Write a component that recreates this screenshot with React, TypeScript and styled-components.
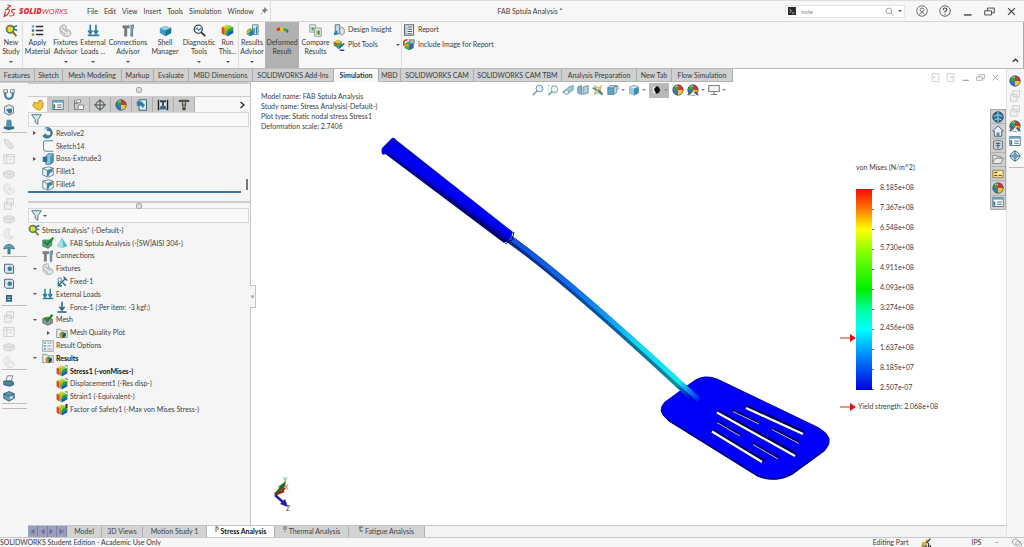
import React from 'react';
import styled, { createGlobalStyle, css } from 'styled-components';

const Global = createGlobalStyle`
  * { box-sizing: border-box; }
  html, body { margin: 0; background: #fff; }
  body, button, input { font-family: Lato, "Open Sans", sans-serif; font-size: 7px; line-height: 9px; color: #3a3a3a; }
  button { border: 0; padding: 0; margin: 0; background: none; white-space: nowrap; }
`;

/* ---------- icons, all on a 16 unit grid ---------- */

const Svg = styled.svg<{ $s: number; $faded?: boolean }>`
  width: ${p => p.$s}px;
  height: ${p => p.$s}px;
  flex: none;
  display: block;
  opacity: ${p => (p.$faded ? 0.35 : 1)};
`;

const teal = '#2f7f9f';
const pale = '#9cc9dc';
const grey = '#8b8f92';

const rainbowCube = (
  <>
    <path d="M8 1L15 4V11L8 15L1 11V4Z" fill="#38b54a" />
    <path d="M8 1L15 4L8 7L1 4Z" fill="#8fcf3a" />
    <path d="M8 1L11 2L4 5L1 4Z" fill="#f6d51f" />
    <path d="M1 4L8 7V9L1 6Z" fill="#f0c52e" />
    <path d="M1 4L4 5V14L1 11Z" fill="#e8402a" />
    <path d="M4 5L6 6V14L4 13Z" fill="#f08a1d" />
    <path d="M8 7L15 4V8L8 11Z" fill="#2a9a4a" />
    <path d="M8 11L15 8V11L8 15Z" fill="#1c55c8" />
  </>
);
const ball = (
  <>
    <circle cx="8" cy="8" r="7" fill="#3a6fc4" />
    <path d="M8 8V1A7 7 0 0 0 1 8Z" fill="#3d9a48" />
    <path d="M8 8V1A7 7 0 0 1 15 8Z" fill="#d8352b" />
    <path d="M8 8H15A7 7 0 0 1 8 15Z" fill="#f0c52e" />
    <circle cx="8" cy="8" r="7" fill="none" stroke="#33414a" strokeWidth="0.8" />
    <path d="M4 4Q6 2 8 3" stroke="#fff" strokeWidth="1.2" fill="none" opacity=".7" />
  </>
);
const folder = <path d="M1 3H6L7 5H15V14H1Z" fill="#eceef0" stroke="#777d82" />;

const art: Record<string, React.ReactNode> = {
  study: (
    <>
      <circle cx="6.5" cy="6.5" r="4.5" fill="#d7e23a" stroke="#3f7f5a" strokeWidth="2" />
      <path d="M1 6Q3 1 7 3" stroke="#e8722a" strokeWidth="1.6" fill="none" />
      <path d="M9 9L14 15" stroke="#8b6a24" strokeWidth="2.4" />
      <path d="M10 4L15 2M11 6L15 8" stroke="#2f6f93" strokeWidth="1.8" />
    </>
  ),
  list: (
    <>
      <path d="M6 3H15M6 8H15M6 13H15" stroke="#333" strokeWidth="1.8" />
      <path d="M1 3H4" stroke="#8a9aa4" strokeWidth="3" /><path d="M1 8H4" stroke="#4c6d86" strokeWidth="3" /><path d="M1 13H4" stroke="#9c8a60" strokeWidth="3" />
    </>
  ),
  fixture: (
    <>
      <path d="M3 2L7 1L9 3L8 6L13 8L15 12L12 15H6L2 11L1 5Z" fill="#e6e9ea" stroke={grey} />
      <path d="M4 4L6 7L11 10M3 9L8 13" stroke={grey} fill="none" />
    </>
  ),
  loads: (
    <path d="M4 1V10M1.500 8L4 12L6.500 8M11 1V10M8.500 8L11 12L13.500 8M1 14H15" stroke={teal} strokeWidth="2" fill="none" />
  ),
  connections: (
    <>
      <path d="M1 2H9V5H6V15H3V5H1Z" fill="#777e84" stroke="#555c61" strokeWidth=".5" />
      <path d="M11 2L14 1V5L13 7V15H11Z" fill="#7fb3ca" stroke="#31566a" strokeWidth=".8" />
    </>
  ),
  shell: (
    <>
      <path d="M1 5L8 2L15 5V11L8 15L1 11Z" fill="#3f9cc4" />
      <path d="M1 5L8 2L15 5L8 8Z" fill="#8fd0e6" />
      <path d="M8 8L15 5V11L8 15Z" fill="#27708f" />
    </>
  ),
  diagnostic: (
    <>
      <circle cx="6.500" cy="6.500" r="5" fill="#eef4f6" stroke="#444c52" strokeWidth="1.6" />
      <path d="M3 7L5 5L7 8L10 5" stroke="#2b7a9b" strokeWidth="1.3" fill="none" />
      <path d="M10 10L15 15" stroke="#333" strokeWidth="2.2" />
    </>
  ),
  cube: rainbowCube,
  results: (
    <>
      <path d="M8 1H15V13H8Z" fill="#dfe8ec" stroke="#5d7480" />
      <path d="M10 5V12M13 3V12" stroke={teal} strokeWidth="1.6" />
      <path d="M1 8L5 5L9 8V13L5 15L1 13Z" fill="#3bb14b" /><path d="M1 8L5 5V10L1 12Z" fill="#e8a22a" /><path d="M5 10L9 8V13L5 15Z" fill="#256bc4" />
    </>
  ),
  deformed: (
    <>
      <path d="M1 5Q8 2 15 7V11Q8 7 1 9Z" fill="#f2d028" /><path d="M1 5L5 4V8L1 9Z" fill="#d8352b" /><path d="M9 4.500L15 7V11L9 8Z" fill="#2fa84a" />
      <path d="M13 6L15 7V11L13 10Z" fill="#256bc4" />
    </>
  ),
  compare: (
    <>
      <path d="M1 1H8V10H1Z" fill="#eef1f2" stroke="#7a868c" /><path d="M7 5H15V15H7Z" fill="#eef1f2" stroke="#7a868c" />
      <path d="M3 4H6V8H3Z" fill="#4ba656" /><path d="M9 8H13V13H9Z" fill="#d9a632" /><path d="M11 8H13V13H11Z" fill="#39965a" />
    </>
  ),
  insight: (
    <>
      <path d="M3 1H9V13H3Z" fill="#bcdbe8" stroke="#35596c" /><path d="M1 15Q2 8 6 9V14Z" fill={teal} />
      <path d="M9 6L12 4L15 7V12L12 15L9 12Z" fill="#e2e6e8" stroke="#69757c" />
    </>
  ),
  plottools: (
    <>
      <path d="M1 4L7 1L12 4V9L6 12L1 9Z" fill="#34a853" /><path d="M1 4L7 1L12 4L6 6Z" fill="#f2c224" /><path d="M1 4L6 6V9L1 7Z" fill="#e2442c" />
      <path d="M7 13L15 6M9 15H15" stroke="#274c8a" strokeWidth="2" />
    </>
  ),
  report: (
    <>
      <path d="M2 1H14V15H2Z" fill="#eef0f2" stroke="#5b666d" strokeWidth="1.400" />
      <path d="M6 4H12M6 7H12M6 10H12M6 13H12" stroke="#3f5866" strokeWidth="1.200" /><path d="M4 3V14" stroke="#7a868c" />
    </>
  ),
  include: (
    <>
      <path d="M8 3L14 6V12L8 15L2 12V6Z" fill="#38b54a" /><path d="M2 6L8 8V11L2 9Z" fill="#f29a1e" /><path d="M8 8L14 6V12L8 15Z" fill="#2563c4" />
      <path d="M1 9V4Q2 1 6 1" stroke="#d8352b" strokeWidth="2" fill="none" /><path d="M8 1H15V6H10Z" fill="#aab6bd" stroke="#6b777e" />
    </>
  ),
  magnify: (<><circle cx="10" cy="6" r="4.500" fill="#e8f3f7" stroke="#6d93a5" strokeWidth="1.300" /><path d="M7 9L1 15" stroke="#7d99a5" strokeWidth="2" /></>),
  magarea: (<><path d="M2 2H13V12H2Z" fill="none" stroke="#a5bac4" strokeDasharray="2 2" /><circle cx="10" cy="7" r="4.500" fill="#e8f3f7" stroke="#6d93a5" /><path d="M7 10L2 15" stroke="#7d99a5" strokeWidth="2" /></>),
  prev: (<><path d="M1 11L9 4L15 2V8L8 13Z" fill={pale} stroke="#6a8c9b" /><circle cx="6" cy="11" r="3" fill="#e8f3f7" stroke="#6a8c9b" /></>),
  section: (<><path d="M1 4L6 2V14L1 12Z" fill="#7fb8cd" stroke="#5c8496" /><path d="M8 4L15 2V12L8 14Z" fill="#a9cfdd" stroke="#5c8496" /></>),
  dyn: (<><path d="M3 2L8 5L13 2L11 8L14 14L8 12L3 14L5 8Z" fill="#e8d27a" stroke="#a8975a" strokeWidth=".8" /><path d="M8 8L14 14" stroke="#3f86a5" strokeWidth="2.500" /><path d="M1 5L6 8" stroke="#3f86a5" strokeWidth="2" /></>),
  orient: (<><path d="M1 5H9V14H1Z" fill="#5ea5c4" stroke="#4c7f97" /><path d="M1 5L4 2H13L9 5ZM9 5L13 2V11L9 14Z" fill="#b7dbe8" stroke="#4c7f97" /><path d="M10 3H15V8" fill="none" stroke="#889" /></>),
  style: (<><path d="M2 4L8 2L14 4V12L8 15L2 12Z" fill="#e2eef3" stroke="#5c8496" /><path d="M8 6L14 4V12L8 15Z" fill="#3f8fb2" /><path d="M2 4L8 6V15L2 12Z" fill="#9bcbdd" /></>),
  eye: (<><path d="M1 8Q8 1 15 8Q8 15 1 8Z" fill="#85898b" /><path d="M8 3V13A5 5 0 0 1 8 3Z" fill="#e8e8e8" /><path d="M8 3A5 5 0 0 1 8 13L6 8Z" fill="#111" /><circle cx="8" cy="7" r="2.500" fill="#111" /></>),
  ball,
  scene: (<>{ball}<path d="M0 15L4 9L8 13L12 9L16 15Z" fill="#55646c" /><path d="M3 15L8 10L13 15Z" fill="#e9eef0" /></>),
  monitor: (<><path d="M1 2H15V10H1Z" fill="#f2f4f5" stroke="#7e8488" strokeWidth="1.500" /><path d="M8 10V14M4 14H12" stroke="#7e8488" strokeWidth="1.600" /></>),
  part: (<path d="M1 9L3 4L8 6L9 2L13 2L15 6L14 12L10 15L5 13Z" fill="#f3c33c" stroke="#a87f1c" />),
  props: (<><path d="M1 2H15V14H1Z" fill="#fff" stroke="#4f7485" strokeWidth="1.200" /><path d="M1 2H15V5H1Z" fill="#6fa9c0" /><path d="M3 7V13" stroke={teal} strokeWidth="2.500" /><path d="M7 8H13M7 11H13" stroke="#4c6874" strokeWidth="1.300" /></>),
  config: (<><path d="M2 1V14H6M2 6H6" stroke="#5b666d" fill="none" /><path d="M5 1H10V5H5ZM7 8H14V14H7Z" fill="#f4f6f7" stroke="#7b858a" strokeWidth="1.200" /></>),
  target: (<><circle cx="8" cy="8" r="5.500" fill="none" stroke="#2d3940" strokeWidth="1.200" /><path d="M8 0V16M0 8H16" stroke="#2d3940" strokeWidth="1.100" /></>),
  targetblue: (<><circle cx="8" cy="8" r="6" fill="#d9e9f0" stroke="#2f6680" strokeWidth="1.200" /><circle cx="8" cy="8" r="3" fill="none" stroke="#2f6680" /><path d="M8 0V16M0 8H16" stroke="#2f6680" /></>),
  cam: (<><path d="M4 1H14V15H4Z" fill="#dceaf0" stroke="#3d6273" strokeWidth="1.300" /><path d="M1 3H7L12 8L9 12L7 9H1Z" fill={teal} /></>),
  mach: (<><path d="M1 1H15V15H1Z" fill="#dfe6ea" /><path d="M2 1V15M14 1V15" stroke="#222" strokeWidth="2" /><path d="M4 3H12M8 4V9" stroke="#2c3f49" strokeWidth="2.400" /><path d="M3 14H13L11 9H5Z" fill="#3b6a80" /></>),
  tool: (<><path d="M1 1H15V4H11L10 15H6L5 4H1Z" fill="#4b4f52" /><path d="M6 4H10L9 8H7Z" fill="#c8a560" /><path d="M6 10H10" stroke="#ddd" /></>),
  funnel: (<path d="M1 1H15L10 8V15L6 12V8Z" fill="#d4e9f1" stroke="#446d80" strokeWidth="1.300" />),
  revolve: (<><path d="M5 1A7 7 0 1 1 1 12L5 9A3.500 3.500 0 1 0 7 5Z" fill="#3b86a4" stroke="#1f5064" strokeWidth=".8" /><path d="M2 2L7 1L7 5Z" fill={pale} /></>),
  sketch: (<path d="M15 1H4Q2 1 2 4V12Q2 15 5 15H15" stroke="#4b7f95" strokeWidth="1.200" fill="none" />),
  extrude: (<><path d="M5 4L9 1H15V12L11 15H5Z" fill="#8fc3d6" stroke="#2f6680" /><path d="M11 5V15L15 12V1Z" fill="#4a91ae" /><path d="M1 5H7V12H1Z" fill="#2f6f8b" /></>),
  fillet: (<><path d="M1 3L9 1L15 3V12L8 15L1 12Z" fill="#eef5f8" stroke="#3f6a7d" /><path d="M7 6L14 4V8Q10 8 9 13L7 14Z" fill="#3a86a5" /><path d="M1 3L7 6L15 3M7 6V14" stroke="#3f6a7d" fill="none" /></>),
  partok: (<><path d="M1 4H13V11L8 15L1 12Z" fill="#64a08a" stroke="#3a6b62" /><path d="M3 6L7 10L15 1" stroke="#168a22" strokeWidth="3" fill="none" /></>),
  cone: (<><path d="M8 1L15 12L8 15L1 12Z" fill="#55b5cc" /><path d="M8 1L10 13L8 15L1 12Z" fill="#a5dfe9" /></>),
  fixed: (<><path d="M3 13L13 3M3 8V13H8M9 9L13 13" stroke="#2b6482" strokeWidth="1.700" fill="none" /><path d="M10 1L15 6" stroke="#2b6482" strokeWidth="1.700" /><circle cx="5" cy="5" r="2.500" stroke="#2b6482" fill="none" /></>),
  force: (<path d="M8 1V10M4.500 7.500L8 12L11.500 7.500M2 14.500H14" stroke="#1f6480" strokeWidth="2" fill="none" />),
  mesh: (<><path d="M1 6L8 4L14 7V12L8 15L1 12Z" fill="#8c9499" stroke="#5c666b" /><path d="M4 5L7 9L14 1" stroke="#168a22" strokeWidth="2.800" fill="none" /></>),
  plotfolder: (<>{folder}<path d="M5 8L9 6L13 8V12L9 15L5 12Z" fill="#2fa84a" /><path d="M5 8L9 10V15L5 12Z" fill="#e8842a" /><path d="M9 10L13 8V12L9 15Z" fill="#246" /></>),
  options: (<><path d="M1 1H15V15H1Z" fill="#f4f6f7" stroke="#79858b" /><path d="M3 4H5M3 8H5M3 12H5" stroke={teal} strokeWidth="2" /><path d="M7 4H13M7 8H13M7 12H13" stroke="#737c81" /></>),
  plot: (<>{rainbowCube}<path d="M11 0H16V4H13Z" fill="#f4f4f4" /><path d="M12 1H15V3" stroke="#555" fill="none" /></>),
  plotfos: (<>{rainbowCube}<path d="M14 0V5" stroke="#222" strokeWidth="2.500" /></>),
  globe: (<><circle cx="8" cy="8" r="7" fill="#2a6f9c" stroke="#22303a" /><path d="M2 7Q8 3 14 7M3 12Q8 8 13 12M8 1V15" stroke="#9fd0e6" strokeWidth="1.300" fill="none" /></>),
  home: (<><path d="M1 8L8 1L15 8H13V15H3V8Z" fill="#e5edf1" stroke="#4b6270" strokeWidth="1.300" /><path d="M6 10H10V15H6Z" fill="#6d8d9e" /></>),
  library: (<><path d="M2 3Q8 0 14 3V13Q8 16 2 13Z" fill="#c7d3d9" stroke="#52626b" /><path d="M5 6H11M5 9H11M8 4V13" stroke="#52626b" strokeWidth="1.300" /></>),
  open: (<path d="M1 13V3H6L7 5H12V7H15L12 14H1ZM1 13L4 7H12" fill="#eceae2" stroke="#6c6f70" />),
  palette: (<><path d="M1 3H15V13H1Z" fill="#f1d98a" stroke="#7e6c34" /><path d="M3 6H7M3 10H7M9 10H13" stroke="#6a5218" strokeWidth="1.600" /><path d="M9 5H13V7H9Z" fill="#fff" /></>),
  hook: (<><path d="M3 3V8A5 5 0 0 0 13 8V3" fill="none" stroke="#3e7f99" strokeWidth="3" /><path d="M1 1H6V5H1ZM10 1H15V5H10Z" fill="#e9f1f4" stroke="#4d6b78" /></>),
  box: (<><path d="M2 4L8 1L14 4V12L8 15L2 12Z" fill="#dfe7eb" stroke="#4a5f6a" /><path d="M4 7L12 6V11L8 13Z" fill={teal} /></>),
  tower: (<><path d="M5 1H11L12 10H4Z" fill="#4d93ad" /><path d="M1 10H15V13L8 15L1 13Z" fill="#2f6f8b" /></>),
  leaf: (<path d="M2 1L8 4L14 11L12 15L6 12L2 6Z" fill="#c3c6c8" stroke="#777c80" />),
  table: (<><path d="M1 2H15V14H1Z" fill="#f0f1f2" stroke="#888" strokeWidth="1.200" /><path d="M1 5H15M5 2V14M8 9H12" stroke="#888" strokeWidth="1.200" /></>),
  puck: (<><path d="M1 6Q8 1 15 6V11Q8 16 1 11Z" fill="#c3c6c8" stroke="#777c80" /><path d="M1 6Q8 11 15 6" fill="none" stroke="#777c80" /></>),
  copy: (<><path d="M5 1H14V9H5ZM2 6H11V15H2Z" fill="#e6e8e9" stroke="#7d8387" strokeWidth="1.200" /></>),
  moon: (<path d="M10 1A7 7 0 1 0 14 12A6 6 0 0 1 10 1Z" fill="#dcdedf" stroke="#8a8f92" />),
  mushroom: (<><path d="M1 8Q2 2 8 2Q14 2 15 8Q8 5 1 8Z" fill="#5aa9c6" stroke="#2c627a" /><path d="M6 7H10V15H6Z" fill="#3c7f9a" /></>),
  cutbox: (<><path d="M2 3H12L14 5V15H4L2 13Z" fill="#dde4e8" stroke="#4a5f6a" strokeWidth="1.200" /><circle cx="9" cy="9" r="3" fill={teal} /></>),
  chip: (<><path d="M4 4H12V13H4Z" fill="#2f6678" /><path d="M6 7H10M6 10H10" stroke="#b7d9e2" strokeWidth="1.300" /></>),
  printer: (<><path d="M6 1H13L11 8H4Z" fill="#f0f4f6" stroke="#5a6d77" /><path d="M1 8H12L14 10V13L9 15L1 13Z" fill="#4586a1" stroke="#2a4e5e" /></>),
  toolbox: (<><path d="M1 5L8 2L15 5V11L8 15L1 11Z" fill="#5ca0bb" stroke="#2a4e5e" /><path d="M1 5L8 8L15 5" fill="none" stroke="#2a4e5e" /><circle cx="11" cy="10" r="2" fill="#dfe9ee" /></>),
  pin: (<path d="M9 1L15 7L12 7L10 10L10 12L4 6L6 6L9 4ZM6 10L1 15" fill="#777" stroke="#777" />),
  user: (<><circle cx="8" cy="8" r="7" fill="none" stroke="#666" strokeWidth="1.200" /><circle cx="8" cy="6.500" r="2.500" fill="none" stroke="#666" strokeWidth="1.200" /><path d="M4 13Q8 7 12 13" fill="none" stroke="#666" strokeWidth="1.200" /></>),
  help: (<><circle cx="8" cy="8" r="7" fill="none" stroke="#555" strokeWidth="1.200" /><path d="M5.500 6.500Q5.500 4 8 4Q10.500 4 10.500 6Q10.500 7.500 8 8.500V10M8 11.500V13" fill="none" stroke="#444" strokeWidth="1.500" /></>),
  min: (<path d="M3 13H14" stroke="currentColor" strokeWidth="2" />),
  restore: (<path d="M1 7H11V13H1ZM5 7V3H15V10H11" fill="none" stroke="currentColor" strokeWidth="1.300" />),
  close: (<path d="M3 3L13 13M13 3L3 13" stroke="currentColor" strokeWidth="1.500" />),
  paneL: (<path d="M2 1H14V15H2ZM5 6V10L7 8Z" fill="none" stroke="currentColor" strokeDasharray="3 1" />),
  paneR: (<path d="M2 1H14V15H2ZM11 6V10L9 8Z" fill="none" stroke="currentColor" strokeDasharray="3 1" />),
  search: (<><circle cx="7" cy="7" r="5" fill="none" stroke="#777" strokeWidth="1.200" /><path d="M11 11L15 15" stroke="#777" strokeWidth="1.300" /></>),
  prompt: (<><path d="M0 0H16V16H0Z" fill="#2a2a2a" /><path d="M3 4L7 8L3 12M8 12H13" stroke="#ddd" strokeWidth="1.500" fill="none" /></>),
  rebuild: (<><path d="M1 12L3 6L6 8L9 2L11 5L6 13Z" fill="#edb42c" stroke="#86661a" strokeWidth=".6" /><path d="M15 1L9 8M12 15V8M8 15V11M15 15V11" stroke="#333" strokeWidth="2" /><path d="M1 14H7" stroke="#333" /></>),
  tag: (<><path d="M1 4L6 1L15 8V12L10 15L1 8Z" fill="none" stroke="#888" strokeWidth="1.200" /><circle cx="9" cy="8" r="3" fill="none" stroke="#888" /></>),
};

const Icon = ({ name, size = 12, faded = false }: { name: string; size?: number; faded?: boolean }) => (
  <Svg $s={size} $faded={faded} viewBox="0 0 16 16" aria-hidden="true">{art[name]}</Svg>
);

const Caret = styled.span<{ $dir?: 'right' | 'down'; $c?: string }>`
  width: 0; height: 0; flex: none;
  border: 2px solid transparent;
  ${p => p.$dir === 'right'
    ? css`border-left: 3px solid ${p.$c || '#555'}; border-right: 0;`
    : css`border-top: 2px solid ${p.$c || '#555'}; border-bottom: 0;`}
`;

/* ---------- frame ---------- */

const Shell = styled.div`
  display: flex; flex-direction: column; min-height: 100vh; background: #f6f6f6; overflow: hidden;
`;

const TitleBar = styled.header`
  display: flex; align-items: center; height: 22px; flex: none;
  background: #f7f7f7; border-top: 1px solid #dcdcdc; border-bottom: 1px solid #d4d4d4;
`;
const TitleLeft = styled.div`
  display: flex; align-items: center; align-self: stretch; width: 271px; flex: none; padding-left: 3px; border-right: 1px solid #dedede;
`;
const Logo = styled.div`
  display: flex; align-items: center; gap: 3px; width: 84px; color: #d0343a;
  font: italic 8px/10px "Open Sans", sans-serif;
  b { font-weight: 800; }
`;
const LogoMark = styled.svg` width: 13px; height: 14px; display: block; `;
const Menu = styled.nav` display: flex; gap: 6px; flex: 1; align-items: center; `;
const DocTitle = styled.div` flex: 1; text-align: center; padding-left: 4px; `;
const TitleRight = styled.div` display: flex; align-items: center; gap: 11px; padding-right: 7px; color: #555; flex: none; `;
const Search = styled.label`
  display: flex; align-items: center; gap: 4px; width: 120px; height: 13px; padding: 0 2px;
  background: #fff; border: 1px solid #e4e4e4;
`;
const SearchInput = styled.input`
  flex: 1; min-width: 0; border: 0; padding: 0 0 0 1px; background: none; color: #888; font-size: 6px; outline: 0;
`;

const Ribbon = styled.section`
  display: flex; height: 47px; flex: none; background: #f7f7f7; border-bottom: 1px solid #b9b9b9; border-right: 1px solid #aaa;
`;
const RibbonButton = styled.button<{ $w: number; $on?: boolean }>`
  width: ${p => p.$w}px; flex: none;
  display: flex; flex-direction: column; align-items: center; justify-content: flex-start;
  padding-top: 2px; background: ${p => (p.$on ? '#b1b1b1' : 'none')};
  text-align: center;
`;
const RibbonLabel = styled.span` white-space: pre; line-height: 9px; height: 24px; padding-top: 1px; `;
const RibbonSep = styled.i` width: 1px; flex: none; background: #dcdcdc; `;
const RibbonStack = styled.div<{ $w: number }>`
  width: ${p => p.$w}px; display: flex; flex-direction: column; gap: 2px; padding: 1px 0 0 1px; flex: none;
`;
const StackButton = styled.button`
  display: flex; align-items: center; gap: 3px; height: 13px; text-align: left;
  ${Caret} { margin-left: auto; margin-right: 1px; }
`;
const Collapse = styled.button`
  margin-left: auto; align-self: flex-end; padding: 0 4px 4px; color: #444;
`;

const Body = styled.div` display: flex; flex: 1; `;
const MainColumn = styled.div` display: flex; flex-direction: column; flex: 1; min-width: 0; `;

const TabRow = styled.div` display: flex; height: 13px; flex: none; background: #fff; `;
const CommandTab = styled.button<{ $w: number; $on?: boolean }>`
  width: ${p => p.$w}px; flex: none; height: 13px; text-align: center;
  background: ${p => (p.$on ? '#f8f8f8' : '#d0d0d0')};
  border-right: 1px solid #ababab;
  border-bottom: 1px solid ${p => (p.$on ? '#f8f8f8' : '#b4b4b4')};
  font-weight: ${p => (p.$on ? 700 : 400)};
`;
const DocButtons = styled.div`
  display: flex; align-items: center; gap: 6px; margin-left: auto; padding: 3px 6px 0 0;
  button { color: #9a9a9a; }
`;

const Work = styled.div` display: flex; flex: 1; min-height: 0; `;
const LeftRail = styled.aside`
  width: 28px; flex: none; border-top: 1px solid #d0d0d0; background: #f6f6f6; padding: 1px 1px 0 2px;
`;
const RailGroup = styled.div`
  padding: 3px 0 0 1px; border-bottom: 1px solid #bcbcbc; min-height: 5px;
`;
const RailButton = styled.button`
  display: flex; align-items: center; width: 14px; height: 15px;
`;
const Center = styled.div` display: flex; flex-direction: column; flex: 1; min-width: 0; `;
const Stage = styled.div` display: flex; flex: 1; min-height: 0; `;

/* ---------- feature panel ---------- */

const Panel = styled.section`
  position: relative; width: 223px; flex: none; background: #f5f5f5;
  border-top: 2px solid #c9c9c9; border-right: 1px solid #c4c4c4;
`;
const Grip = styled.div`
  display: flex; align-items: center; justify-content: center; height: 12px;
  &::after { content: ''; width: 4px; height: 4px; border-radius: 2px; border: 1px solid #aaa; background: #ddd; }
`;
const SplitGrip = styled.div`
  height: 7px; margin-top: 8px; border-top: 2px solid #cdcdcd; display: flex; align-items: center; justify-content: center;
  &::after { content: ''; width: 4px; height: 4px; border-radius: 2px; border: 1px solid #aaa; background: #ddd; }
`;
const PanelTabs = styled.div` display: flex; height: 16px; border-top: 1px solid #ccc; background: #f8f8f8; `;
const PanelTab = styled.button<{ $on?: boolean }>`
  width: ${p => (p.$on ? 20 : 21)}px; display: flex; align-items: center; justify-content: center;
  background: ${p => (p.$on ? '#f8f8f8' : '#cbcbcb')};
  border-right: 1px solid ${p => (p.$on ? '#ccc' : '#adadad')};
`;
const More = styled.button` margin-left: auto; padding: 0 4px; color: #222; `;
const Filter = styled.div`
  height: 15px; display: flex; align-items: center; gap: 1px; padding-left: 2px; margin-right: 1px;
  border: 1px solid #d2d9dc; background: #f9f9f9;
`;
const Tree = styled.ul<{ $h: number }>`
  list-style: none; margin: 0; padding: 0; display: grid; grid-auto-rows: 1fr; height: ${p => p.$h}px;
`;
const FeatureArea = styled.div`
  display: flex; border-bottom: 2px solid #3a76ad; margin-right: 9px; position: relative;
  ${Tree} { flex: 1; }
`;
const StudyArea = styled.div` padding-top: 1px; `;
const Thumb = styled.i` position: absolute; right: -7px; bottom: 1px; width: 2px; height: 11px; background: #777; `;
const Row = styled.li<{ $indent: number; $bold?: boolean }>`
  display: flex; align-items: center; gap: 2px; padding-left: ${p => p.$indent}px;
  font-weight: ${p => (p.$bold ? 700 : 400)};
  color: ${p => (p.$bold ? '#111' : '#3f3f3f')};
  white-space: nowrap;
`;
const Toggle = styled.span` width: 7px; display: flex; flex: none; align-items: center; `;
const SideHandle = styled.button`
  position: absolute; z-index: 2; right: -6px; top: 201px; width: 6px; height: 23px;
  background: #f5f5f5; border: 1px solid #c4c4c4; border-left: 0; display: flex; align-items: center; justify-content: center;
  &::after { content: ''; width: 3px; height: 3px; border-radius: 2px; background: #aaa; }
`;

/* ---------- graphics area ---------- */

const Viewport = styled.main` position: relative; flex: 1; min-width: 0; background: #fff; min-height: 440px; `;
const Model = styled.svg` position: absolute; inset: 0; width: 100%; height: 100%; `;
const Info = styled.div` position: absolute; left: 10px; top: 9px; line-height: 10px; white-space: nowrap; `;
const Hud = styled.div`
  position: absolute; top: 0; left: 0; right: 0; height: 16px;
  display: flex; justify-content: center; align-items: center; gap: 3px;
`;
const HudButton = styled.button<{ $on?: boolean }>`
  display: flex; align-items: center; gap: 2px; height: 15px;
  padding: ${p => (p.$on ? '0 1px' : '0')};
  background: ${p => (p.$on ? '#b9b9b9' : 'none')};
`;
const Palette = styled.div`
  position: absolute; right: 0; top: 27px; width: 16px; height: 101px; display: flex; flex-direction: column;
  border: 1px solid #aaa; background: #cfcfcf;
`;
const PaletteButton = styled.button`
  flex: 1; display: flex; align-items: center; justify-content: center;
  & + & { border-top: 1px solid #b0b0b0; }
`;
const Legend = styled.figure`
  position: absolute; right: 62px; top: 81px; margin: 0; width: 104px; padding-left: 16px; white-space: nowrap;
`;
const LegendScale = styled.div` display: flex; margin-top: 17px; `;
const Bar = styled.div`
  position: relative; width: 16px; height: 201px;
  background: linear-gradient(#f50a00 0%, #ff7a00 10%, #ffff00 20%, #80ff00 32%, #00f000 50%, #00ffa0 60%, #00ffff 70%, #0090ff 82%, #0000e0 100%);
`;
const TickMarks = styled.div`
  width: 2px; height: 201px;
  background: repeating-linear-gradient(#555 0 1px, transparent 1px 20px);
`;
const Ticks = styled.ol`
  list-style: none; margin: -12px 0 0; padding: 0 0 0 6px;
  li { display: flex; align-items: center; height: 20px; }
`;
const Marker = styled.svg` position: absolute; width: 16px; height: 8px; left: -16px; `;
const Yield = styled.figcaption` position: relative; margin-top: 5px; padding-left: 2px; `;
const Triad = styled.svg` position: absolute; left: 20px; bottom: 14px; width: 26px; height: 40px; font-size: 7px; `;

/* ---------- bottom ---------- */

const SheetTabs = styled.div`
  display: flex; height: 12px; flex: none; background: #f3f3f3; border-top: 1px solid #c4c4c4;
`;
const SheetNav = styled.div` display: flex; width: 39px; background: #9b9fbe; `;
const SheetNavButton = styled.button`
  flex: 1; display: flex; align-items: center; justify-content: center; border-right: 1px solid #7c80a5;
`;
const SheetTab = styled.button<{ $w: number; $on?: boolean }>`
  width: ${p => p.$w}px; display: flex; align-items: center; justify-content: center; gap: 2px;
  background: ${p => (p.$on ? '#fff' : '#d3d3d3')};
  font-weight: ${p => (p.$on ? 700 : 400)};
  color: ${p => (p.$on ? '#111' : '#3f3f3f')};
  border-right: 1px solid #b0b0b0;
`;
const SheetGlyph = styled.svg` width: 4px; height: 6px; align-self: flex-start; `;
const RightRail = styled.aside`
  width: 18px; flex: none; background: #f6f6f6; border-left: 1px solid #e2e2e2; padding: 4px 0 0 2px;
`;
const StatusBar = styled.footer`
  display: flex; align-items: center; height: 10px; flex: none; background: #f6f6f6; border-top: 1px solid #c9c9c9; padding-right: 2px;
`;
const StatusRight = styled.div` margin-left: auto; display: flex; align-items: center; gap: 13px; `;
const StatusUnits = styled.div` margin-left: 27px; display: flex; align-items: center; gap: 14px; `;

/* ---------- data ---------- */

type Cmd = { label: string; icon: string; w: number; menu?: boolean; on?: boolean; sep?: boolean };
const commands: Cmd[] = [
  { label: 'New\nStudy', icon: 'study', w: 22, menu: true, sep: true },
  { label: 'Apply\nMaterial', icon: 'list', w: 29 },
  { label: 'Fixtures\nAdvisor', icon: 'fixture', w: 27, menu: true },
  { label: 'External\nLoads ...', icon: 'loads', w: 28, menu: true },
  { label: 'Connections\nAdvisor', icon: 'connections', w: 42, menu: true },
  { label: 'Shell\nManager', icon: 'shell', w: 32 },
  { label: 'Diagnostic\nTools', icon: 'diagnostic', w: 36, menu: true },
  { label: 'Run\nThis...', icon: 'cube', w: 21, menu: true, sep: true },
  { label: 'Results\nAdvisor', icon: 'results', w: 26, menu: true },
  { label: 'Deformed\nResult', icon: 'deformed', w: 34, on: true },
  { label: 'Compare\nResults', icon: 'compare', w: 33 },
];
const tabs: [string, number][] = [
  ['Features', 35], ['Sketch', 28], ['Mesh Modeling', 59], ['Markup', 32], ['Evaluate', 35], ['MBD Dimensions', 64],
  ['SOLIDWORKS Add-Ins', 81], ['Simulation', 45], ['MBD', 22], ['SOLIDWORKS CAM', 73], ['SOLIDWORKS CAM TBM', 88],
  ['Analysis Preparation', 75], ['New Tab', 35], ['Flow Simulation', 61],
];
const rail: { icons: string[]; faded?: number }[] = [
  { icons: ['hook', 'box', 'tower'] },
  { icons: ['leaf', 'table', 'puck', 'fixture', 'copy', 'puck', 'moon', 'mushroom'], faded: 7 },
  { icons: ['cutbox', 'cutbox', 'chip'] },
  { icons: ['copy', 'table', 'puck', 'fixture'], faded: 4 },
  { icons: ['printer', 'toolbox'] },
  { icons: [] },
];
type Node = { text: string; icon: string; icon2?: string; indent: number; root?: boolean; tog?: 'right' | 'down'; bold?: boolean };
const features: Node[] = [
  { text: 'Revolve2', icon: 'revolve', indent: 5, tog: 'right' },
  { text: 'Sketch14', icon: 'sketch', indent: 5 },
  { text: 'Boss-Extrude3', icon: 'extrude', indent: 5, tog: 'right' },
  { text: 'Fillet1', icon: 'fillet', indent: 5 },
  { text: 'Fillet4', icon: 'fillet', indent: 5 },
];
const study: Node[] = [
  { text: 'Stress Analysis* (-Default-)', icon: 'study', indent: 0, root: true },
  { text: 'FAB Sptula Analysis (-[SW]AISI 304-)', icon: 'partok', icon2: 'cone', indent: 5 },
  { text: 'Connections', icon: 'connections', indent: 5 },
  { text: 'Fixtures', icon: 'fixture', indent: 5, tog: 'down' },
  { text: 'Fixed-1', icon: 'fixed', indent: 19 },
  { text: 'External Loads', icon: 'loads', indent: 5, tog: 'down' },
  { text: 'Force-1 (:Per item: -3 kgf:)', icon: 'force', indent: 19 },
  { text: 'Mesh', icon: 'mesh', indent: 5, tog: 'down' },
  { text: 'Mesh Quality Plot', icon: 'plotfolder', indent: 19, tog: 'right' },
  { text: 'Result Options', icon: 'options', indent: 5 },
  { text: 'Results', icon: 'plotfolder', indent: 5, tog: 'down', bold: true },
  { text: 'Stress1 (-vonMises-)', icon: 'plot', indent: 19, bold: true },
  { text: 'Displacement1 (-Res disp-)', icon: 'plot', indent: 19 },
  { text: 'Strain1 (-Equivalent-)', icon: 'plot', indent: 19 },
  { text: 'Factor of Safety1 (-Max von Mises Stress-)', icon: 'plotfos', indent: 19 },
];
const hud: { icon: string; menu?: boolean; on?: boolean }[] = [
  { icon: 'magnify' }, { icon: 'magarea' }, { icon: 'prev' }, { icon: 'section' }, { icon: 'dyn' }, { icon: 'orient', menu: true },
  { icon: 'style', menu: true }, { icon: 'eye', menu: true, on: true }, { icon: 'ball' }, { icon: 'scene', menu: true }, { icon: 'monitor', menu: true },
];
const scale = ['8.185e+08', '7.367e+08', '6.548e+08', '5.730e+08', '4.911e+08', '4.093e+08', '3.274e+08', '2.456e+08', '1.637e+08', '8.185e+07', '2.507e-07'];
const sheets: { label: string; w: number; glyph?: string; on?: boolean }[] = [
  { label: 'Model', w: 35 }, { label: '3D Views', w: 41 }, { label: 'Motion Study 1', w: 64 },
  { label: 'Stress Analysis', w: 68, glyph: 'M1 0V6M1 1H3V4', on: true },
  { label: 'Thermal Analysis', w: 74, glyph: 'M1 0V4M3 0V4M2 5V6' },
  { label: 'Fatigue Analysis', w: 76, glyph: 'M0 1H4M1 1V5H4' },
];
const sheetNav: [string, string][] = [
  ['First sheet', 'M5 0L2 3L5 6ZM1 0V6'], ['Previous sheet', 'M5 0L2 3L5 6Z'], ['Next sheet', 'M1 0L4 3L1 6Z'], ['Last sheet', 'M1 0L4 3L1 6ZM5 0V6'],
];

const TreeRow = ({ n }: { n: Node }) => (
  <Row $indent={n.indent} $bold={n.bold}>
    {!n.root && <Toggle>{n.tog && <Caret $dir={n.tog} />}</Toggle>}
    <Icon name={n.icon} />
    {n.icon2 && <Icon name={n.icon2} />}
    {n.text}
  </Row>
);

const RedArrow = ({ top }: { top: number }) => (
  <Marker viewBox="0 0 16 8" style={{ top }}>
    <path d="M0 4H11" stroke="#b23030" />
    <path d="M10 0L16 4L10 8Z" fill="#e01010" />
  </Marker>
);

const Spatula = () => (
  <Model viewBox="251 82 755 443" aria-label="Stress plot of the spatula">
    <defs>
      <linearGradient id="grip" gradientUnits="userSpaceOnUse" x1="453" y1="182" x2="443" y2="196">
        <stop offset="0" stopColor="#0000c4" /><stop offset=".3" stopColor="#0000fa" /><stop offset=".7" stopColor="#0000ee" /><stop offset="1" stopColor="#000070" />
      </linearGradient>
      <linearGradient id="rod" gradientUnits="userSpaceOnUse" x1="510" y1="238" x2="700" y2="404">
        <stop offset="0" stopColor="#1450d8" /><stop offset=".3" stopColor="#1268e8" /><stop offset=".5" stopColor="#109cf0" />
        <stop offset=".66" stopColor="#10d8f0" /><stop offset=".88" stopColor="#18e8f0" /><stop offset=".94" stopColor="#0878f0" /><stop offset="1" stopColor="#0000ff" />
      </linearGradient>
      <linearGradient id="under" gradientUnits="userSpaceOnUse" x1="510" y1="238" x2="700" y2="404">
        <stop offset="0" stopColor="#08208a" /><stop offset=".5" stopColor="#0a58a0" /><stop offset=".88" stopColor="#0e9098" /><stop offset=".96" stopColor="#0000e0" /><stop offset="1" stopColor="#0000fa" />
      </linearGradient>
    </defs>
    <path d="M665 402L694 381Q704 374 717 379L819 428Q836 438 825 450L792 474Q776 483 758 476L668 420Q656 411 665 402Z" fill="#0000fa" stroke="#0000a0" strokeWidth="1" />
    <path d="M668 420L758 476Q776 483 792 474L825 450" fill="none" stroke="#000078" strokeWidth="1.500" />
    <g fill="none" stroke="#00004e" strokeWidth="3">
      <path d="M746 406L804 432M717 411L796 454M712 430L764 461" />
      <path d="M732 410L759 423M771 428L799 442M716 421L741 435M752 443L779 458" strokeWidth="2" />
    </g>
    <g fill="none" stroke="#fff">
      <path d="M746 408L803 434M717 412.500L795 456M712 431.500L762 462" strokeWidth="2.200" />
      <path d="M733 411.500L759 424M772 429.500L799 443.500M717 422.500L740 436M753 444.500L778 459" strokeWidth="1" stroke="#b8b8d8" />
    </g>
    <path d="M508 238Q565 278 698 402" fill="none" stroke="url(#under)" strokeWidth="8" />
    <path d="M509 237Q566 277 699 400" fill="none" stroke="url(#rod)" strokeWidth="5" />
    <path d="M395 139L513 232Q511 240 504 243L384 153Z" fill="url(#grip)" />
    <path d="M392 138Q394 137 396 140L387 152Q385 156 382 154Q381 150 382 148Z" fill="#0000e0" />
    <path d="M396 139Q388 144 385 154" stroke="#000090" strokeWidth=".7" fill="none" />
    <path d="M514 232L512 240L505 244" stroke="#000070" fill="none" />
  </Model>
);

export default function App() {
  return (
    <Shell>
      <Global />
      <TitleBar>
        <TitleLeft>
          <Logo>
            <LogoMark viewBox="0 0 26 28">
              <path d="M9 2L15 4L8 9M4 12Q16 7 12 16Q10 22 2 25L5 15" fill="none" stroke="#d0343a" strokeWidth="2.200" />
              <path d="M25 11Q17 10 17 14Q18 17 22 19Q23 24 13 24" fill="none" stroke="#d0343a" strokeWidth="2.200" />
            </LogoMark>
            <span><b>SOLID</b>WORKS</span>
          </Logo>
          <Menu>
            {['File', 'Edit', 'View', 'Insert', 'Tools', 'Simulation', 'Window'].map(m => <button key={m}>{m}</button>)}
            <button aria-label="Pin menu"><Icon name="pin" size={8} /></button>
          </Menu>
        </TitleLeft>
        <DocTitle>FAB Sptula Analysis *</DocTitle>
        <TitleRight>
          <Search>
            <Icon name="prompt" size={8} />
            <SearchInput defaultValue="note" aria-label="Search commands" />
            <Icon name="search" size={9} />
            <Caret />
          </Search>
          <button aria-label="Account"><Icon name="user" /></button>
          <button aria-label="Help"><Icon name="help" /></button>
          <button aria-label="Minimize"><Icon name="min" size={11} /></button>
          <button aria-label="Restore"><Icon name="restore" size={11} /></button>
          <button aria-label="Close"><Icon name="close" size={11} /></button>
        </TitleRight>
      </TitleBar>

      <Ribbon>
        {commands.map(c => (
          <React.Fragment key={c.label}>
            <RibbonButton $w={c.w} $on={c.on}>
              <Icon name={c.icon} size={13} />
              <RibbonLabel>{c.label}</RibbonLabel>
              {c.menu && <Caret />}
            </RibbonButton>
            {c.sep && <RibbonSep />}
          </React.Fragment>
        ))}
        <RibbonStack $w={69}>
          <StackButton><Icon name="insight" />Design Insight</StackButton>
          <StackButton><Icon name="plottools" />Plot Tools<Caret /></StackButton>
        </RibbonStack>
        <RibbonSep />
        <RibbonStack $w={120}>
          <StackButton><Icon name="report" />Report</StackButton>
          <StackButton><Icon name="include" />Include Image for Report</StackButton>
        </RibbonStack>
        <Collapse aria-label="Collapse ribbon">
          <Svg $s={7} viewBox="0 0 16 16"><path d="M2 11L8 5L14 11" fill="none" stroke="#333" strokeWidth="3" /></Svg>
        </Collapse>
      </Ribbon>

      <Body>
        <MainColumn>
          <TabRow>
            {tabs.map(([t, w]) => <CommandTab key={t} $w={w} $on={t === 'Simulation'}>{t}</CommandTab>)}
            <DocButtons>
              {['paneL', 'paneR', 'min', 'restore', 'close'].map(i => (
                <button key={i} aria-label={i}><Icon name={i} size={9} /></button>
              ))}
            </DocButtons>
          </TabRow>
          <Work>
            <LeftRail>
              {rail.map((g, k) => (
                <RailGroup key={k}>
                  {g.icons.map((i, j) => (
                    <RailButton key={j} aria-label={i}><Icon name={i} faded={j < (g.faded || 0)} /></RailButton>
                  ))}
                </RailGroup>
              ))}
            </LeftRail>
            <Center>
              <Stage>
                <Panel>
                  <Grip />
                  <PanelTabs>
                    {['part', 'props', 'config', 'target', 'ball', 'cam', 'mach', 'tool'].map((i, k) => (
                      <PanelTab key={i} $on={k === 0} aria-label={i}><Icon name={i} /></PanelTab>
                    ))}
                    <More aria-label="More tabs">
                      <Svg $s={8} viewBox="0 0 16 16"><path d="M5 2L12 8L5 14" fill="none" stroke="#222" strokeWidth="2.500" /></Svg>
                    </More>
                  </PanelTabs>
                  <Filter><Icon name="funnel" size={11} /></Filter>
                  <FeatureArea>
                    <Tree $h={64}>{features.map(n => <TreeRow key={n.text} n={n} />)}</Tree>
                    <Thumb />
                  </FeatureArea>
                  <SplitGrip />
                  <Filter><Icon name="funnel" size={11} /><Caret /></Filter>
                  <StudyArea>
                    <Tree $h={192}>{study.map(n => <TreeRow key={n.text} n={n} />)}</Tree>
                  </StudyArea>
                  <SideHandle aria-label="Collapse panel" />
                </Panel>
                <Viewport>
                  <Spatula />
                  <Info>
                    Model name: FAB Sptula Analysis<br />
                    Study name: Stress Analysis(-Default-)<br />
                    Plot type: Static nodal stress Stress1<br />
                    Deformation scale: 2.7406
                  </Info>
                  <Hud>
                    {hud.map(h => (
                      <HudButton key={h.icon} $on={h.on} aria-label={h.icon}>
                        <Icon name={h.icon} size={12} />{h.menu && <Caret $c="#888" />}
                      </HudButton>
                    ))}
                  </Hud>
                  <Palette>
                    {['globe', 'home', 'library', 'open', 'palette', 'ball', 'props'].map(i => (
                      <PaletteButton key={i} aria-label={i}><Icon name={i} /></PaletteButton>
                    ))}
                  </Palette>
                  <Legend>
                    von Mises (N/m^2)
                    <LegendScale>
                      <Bar><RedArrow top={145} /></Bar>
                      <TickMarks />
                      <Ticks>{scale.map(s => <li key={s}>{s}</li>)}</Ticks>
                    </LegendScale>
                    <Yield><RedArrow top={1} />Yield strength: 2.068e+08</Yield>
                  </Legend>
                  <Triad viewBox="0 0 26 40">
                    <path d="M4 24L12 15" stroke="#1f6a1f" strokeWidth="3" /><path d="M7 16L15 10L13 18Z" fill="#1f6a1f" />
                    <path d="M5 23L13 20" stroke="#8a2a1a" strokeWidth="2.500" /><path d="M10 17L15 17L11 22Z" fill="#a03020" />
                    <path d="M4 24L13 32" stroke="#2020a0" strokeWidth="2.500" /><path d="M14 28L17 36L9 33Z" fill="#2020a0" />
                    <text x="12" y="12" fill="#4a8a4a">Y</text><text x="13" y="19" fill="#c05050">X</text><text x="15" y="40" fill="#4a4a70">Z</text>
                  </Triad>
                </Viewport>
              </Stage>
              <SheetTabs>
                <SheetNav>
                  {sheetNav.map(([label, d]) => (
                    <SheetNavButton key={label} aria-label={label}>
                      <Svg $s={5} viewBox="0 0 6 6"><path d={d} fill="#666a95" stroke="#666a95" strokeWidth=".6" /></Svg>
                    </SheetNavButton>
                  ))}
                </SheetNav>
                {sheets.map(s => (
                  <SheetTab key={s.label} $w={s.w} $on={s.on}>
                    {s.glyph && <SheetGlyph viewBox="0 0 4 6"><path d={s.glyph} fill="none" stroke="#444" strokeWidth=".8" /></SheetGlyph>}
                    {s.label}
                  </SheetTab>
                ))}
              </SheetTabs>
            </Center>
          </Work>
        </MainColumn>
        <RightRail>
          <RailButton aria-label="Appearances"><Icon name="ball" /></RailButton>
          <RailButton aria-label="Copy appearance"><Icon name="copy" faded /></RailButton>
          <RailButton aria-label="Paste appearance"><Icon name="copy" faded /></RailButton>
          <RailButton aria-label="Scene"><Icon name="scene" /></RailButton>
          <RailButton aria-label="Display"><Icon name="props" /></RailButton>
          <RailButton aria-label="Origin"><Icon name="targetblue" /></RailButton>
          <RailGroup />
        </RightRail>
      </Body>

      <StatusBar>
        SOLIDWORKS Student Edition - Academic Use Only
        <StatusRight>
          <span>Editing Part</span>
          <Icon name="rebuild" size={10} />
          <StatusUnits><span>IPS</span><span>-</span><Icon name="tag" size={10} /></StatusUnits>
        </StatusRight>
      </StatusBar>
    </Shell>
  );
}
